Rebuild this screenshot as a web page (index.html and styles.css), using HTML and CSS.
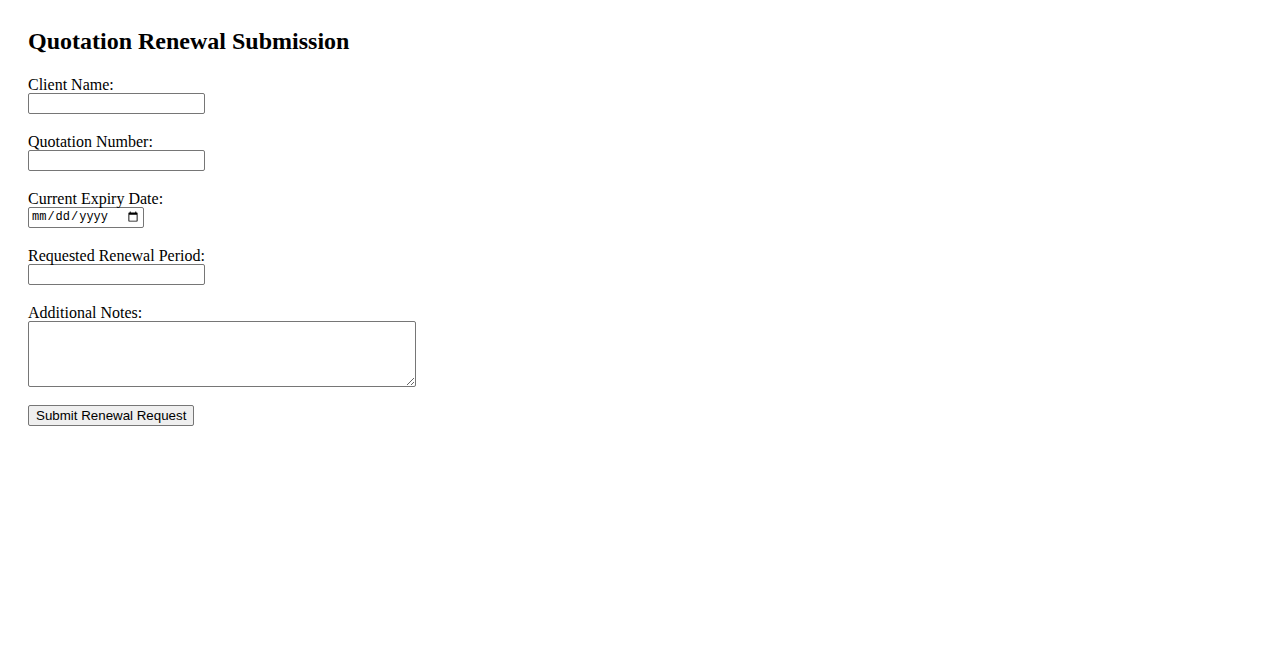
FILE: index.html
```html
<!DOCTYPE html>
<html>
<head>
<meta charset="utf-8">
<title>Quotation Renewal Submission</title>
<link rel="stylesheet" href="styles.css">
</head>
<body>
<div class="page">
  <h2 class="title">Quotation Renewal Submission</h2>
  <form class="form">
    <div class="field">
      <label class="label" for="client">Client Name:</label>
      <input class="text-input" type="text" id="client">
    </div>
    <div class="field">
      <label class="label" for="quote">Quotation Number:</label>
      <input class="text-input" type="text" id="quote">
    </div>
    <div class="field">
      <label class="label" for="expiry">Current Expiry Date:</label>
      <input class="date-input" type="date" id="expiry">
    </div>
    <div class="field">
      <label class="label" for="period">Requested Renewal Period:</label>
      <input class="text-input" type="text" id="period">
    </div>
    <div class="field field-last">
      <label class="label" for="notes">Additional Notes:</label>
      <textarea class="notes" id="notes"></textarea>
    </div>
    <button class="submit" type="submit">Submit Renewal Request</button>
  </form>
</div>
</body>
</html>
```
FILE: styles.css
```css
body {
  margin: 8px;
  font-family: "Liberation Serif", "Times New Roman", serif;
  font-size: 16px;
  color: #000;
  background: #fff;
}
.page {
  padding: 20px;
}
.title {
  margin: 0 0 20px;
  font-size: 24px;
  font-weight: bold;
  line-height: 1.15;
}
.field {
  margin-bottom: 19px;
}
.field-last {
  margin-bottom: 18px;
}
.label {
  display: block;
  line-height: 17px;
}
.text-input {
  box-sizing: border-box;
  width: 177px;
  height: 21px;
  margin: 0;
  padding: 1px 2px;
  border: 1px solid #767676;
  border-radius: 2px;
  font-family: "Liberation Sans", Arial, sans-serif;
  font-size: 13.33px;
  display: block;
}
.date-input {
  box-sizing: border-box;
  width: 116px;
  height: 21px;
  margin: 0;
  padding: 1px 2px;
  border: 1px solid #767676;
  border-radius: 2px;
  font-family: "Liberation Mono", "Courier New", monospace;
  font-size: 12px;
  display: block;
}
.notes {
  box-sizing: border-box;
  width: 388px;
  height: 66px;
  margin: 0;
  padding: 2px;
  border: 1px solid #767676;
  border-radius: 2px;
  display: block;
  font-family: "Liberation Mono", monospace;
  font-size: 13.33px;
}
.submit {
  box-sizing: border-box;
  height: 21px;
  margin: 0;
  padding: 1px 7px;
  border: 1px solid #767676;
  border-radius: 2px;
  background: #efefef;
  font-family: "Liberation Sans", Arial, sans-serif;
  font-size: 13.33px;
  color: #000;
}
```
